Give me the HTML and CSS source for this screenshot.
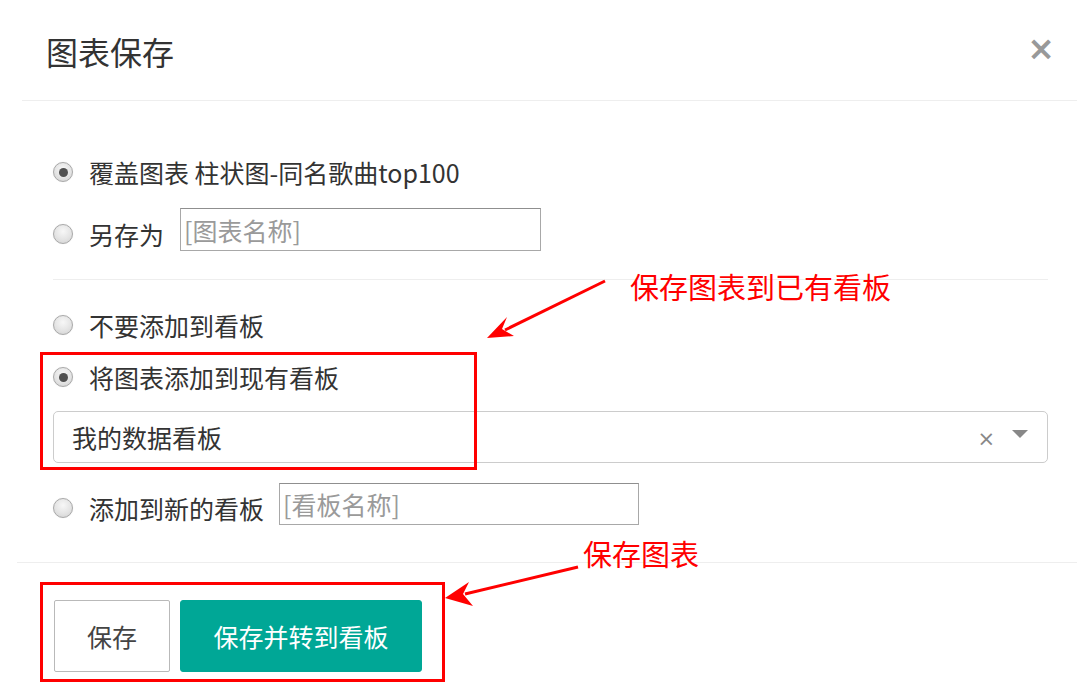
FILE: index.html
```html
<!DOCTYPE html>
<html lang="zh-CN">
<head>
<meta charset="utf-8">
<link rel="stylesheet" href="styles.css">
</head>
<body>
<div class="dialog">
  <div class="header">
    <div class="title">图表保存</div>
    <div class="close">×</div>
  </div>
  <div class="body">
    <div class="row r1">
      <span class="radio checked"></span>
      <span class="label">覆盖图表 柱状图-同名歌曲top100</span>
    </div>
    <div class="row r2">
      <span class="radio"></span>
      <span class="label">另存为</span>
      <span class="input w1">[图表名称]</span>
    </div>
    <div class="divider"></div>
    <div class="row r3">
      <span class="radio"></span>
      <span class="label">不要添加到看板</span>
    </div>
    <div class="row r4">
      <span class="radio checked"></span>
      <span class="label">将图表添加到现有看板</span>
    </div>
    <div class="select">
      <span class="sel-text">我的数据看板</span>
      <span class="sel-clear">×</span>
      <span class="sel-caret"></span>
    </div>
    <div class="row r5">
      <span class="radio"></span>
      <span class="label">添加到新的看板</span>
      <span class="input w2">[看板名称]</span>
    </div>
  </div>
  <div class="footer">
    <button class="btn btn-default">保存</button>
    <button class="btn btn-primary">保存并转到看板</button>
  </div>
</div>

<div class="mark box1"></div>
<div class="mark box2"></div>
<div class="note note1">保存图表到已有看板</div>
<div class="note note2">保存图表</div>
<svg class="arrows" width="1077" height="696" viewBox="0 0 1077 696">
  <line x1="605" y1="281" x2="505" y2="330" stroke="#ff0000" stroke-width="3"/>
  <polygon points="487,338 507,317 502,329 514,336" fill="#ff0000"/>
  <line x1="578" y1="567" x2="465" y2="594" stroke="#ff0000" stroke-width="3"/>
  <polygon points="445,598 469,582 463,594 473,606" fill="#ff0000"/>
</svg>
</body>
</html>
```
FILE: styles.css
```css
* { box-sizing: border-box; }
html, body {
  margin: 0;
  padding: 0;
  background: #fff;
}
body {
  width: 1077px;
  height: 696px;
  overflow: hidden;
  position: relative;
  font-family: "Noto Sans CJK SC", "Noto Sans", sans-serif;
  color: #333;
}
.dialog {
  width: 1077px;
}
.header {
  margin-left: 22px;
  height: 101px;
  border-bottom: 1px solid #eeeeee;
  display: flex;
  justify-content: space-between;
  align-items: flex-start;
  padding: 29px 22px 0 24px;
}
.title {
  font-size: 32px;
  line-height: 44px;
  color: #333;
}
.close {
  font-family: "DejaVu Sans", sans-serif;
  font-weight: bold;
  font-size: 33px;
  line-height: 33px;
  margin-top: 3px;
  color: #999;
}
.body {
  padding: 50px 29px 0 53px;
}
.row {
  display: flex;
  align-items: center;
  height: 42px;
}
.r2 { margin-top: 15px; height: 43px; }
.r3 { margin-top: 24px; }
.r4 { margin-top: 10px; }
.r5 { margin-top: 20px; }
.radio {
  width: 20px;
  height: 20px;
  border-radius: 50%;
  border: 1px solid #a9a9a9;
  background: radial-gradient(circle at 50% 35%, #f7f7f7 0%, #e4e4e4 55%, #cfcfcf 100%);
  box-shadow: 0 0 1px rgba(0,0,0,0.15);
  flex: none;
  position: relative;
}
.r2 .radio, .r5 .radio { margin-top: 8px; }
.radio.checked::after {
  content: "";
  position: absolute;
  left: 4.5px;
  top: 4.5px;
  width: 9px;
  height: 9px;
  border-radius: 50%;
  background: #505050;
}
.label {
  font-size: 25px;
  margin-left: 16px;
  line-height: 32px;
}
.r2 .label, .r5 .label { margin-top: 8px; }
.input {
  display: flex;
  align-items: center;
  height: 43px;
  border: 1px solid #a8a8a8;
  border-top-color: #8f8f8f;
  margin-left: 16px;
  padding-left: 3px;
  font-size: 25px;
  color: #9a9a9a;
}
.w1 { width: 361px; }
.w2 { width: 360px; height: 42px; margin-left: 15px; }
.divider {
  margin-top: 28px;
  height: 1px;
  background: #eeeeee;
}
.select {
  margin-top: 13px;
  height: 52px;
  border: 1px solid #cccccc;
  border-radius: 5px;
  display: flex;
  align-items: center;
  padding: 0 19px 0 18px;
}
.sel-text {
  flex: 1;
  font-size: 25px;
  color: #333;
}
.sel-clear {
  font-family: "DejaVu Sans", sans-serif;
  font-size: 21px;
  color: #888;
  margin-right: 17px;
  margin-top: 3px;
}
.sel-caret {
  width: 0;
  height: 0;
  border-left: 8px solid transparent;
  border-right: 8px solid transparent;
  border-top: 8px solid #888;
  margin-bottom: 6px;
}
.footer {
  margin-left: 17px;
  margin-top: 37px;
  border-top: 1px solid #eeeeee;
  padding: 37px 0 0 37px;
  display: flex;
  gap: 10px;
}
.btn {
  height: 72px;
  font-family: "Noto Sans CJK SC", "Noto Sans", sans-serif;
  font-size: 25px;
  border-radius: 2px;
  cursor: pointer;
}
.btn-default {
  width: 116px;
  background: #fff;
  border: 1px solid #b9b9b9;
  color: #444;
}
.btn-primary {
  width: 242px;
  background: #00a796;
  border: 1px solid #00a796;
  color: #fff;
  border-radius: 3px;
}
.mark {
  position: absolute;
  border: 3px solid #ff0000;
}
.box1 { left: 40px; top: 352px; width: 437px; height: 118px; }
.box2 { left: 40px; top: 582px; width: 405px; height: 100px; }
.note {
  position: absolute;
  color: #ff0000;
  font-size: 29px;
  line-height: 34px;
}
.note1 { left: 630px; top: 269px; }
.note2 { left: 583px; top: 536px; }
.arrows {
  position: absolute;
  left: 0;
  top: 0;
  pointer-events: none;
}
```
